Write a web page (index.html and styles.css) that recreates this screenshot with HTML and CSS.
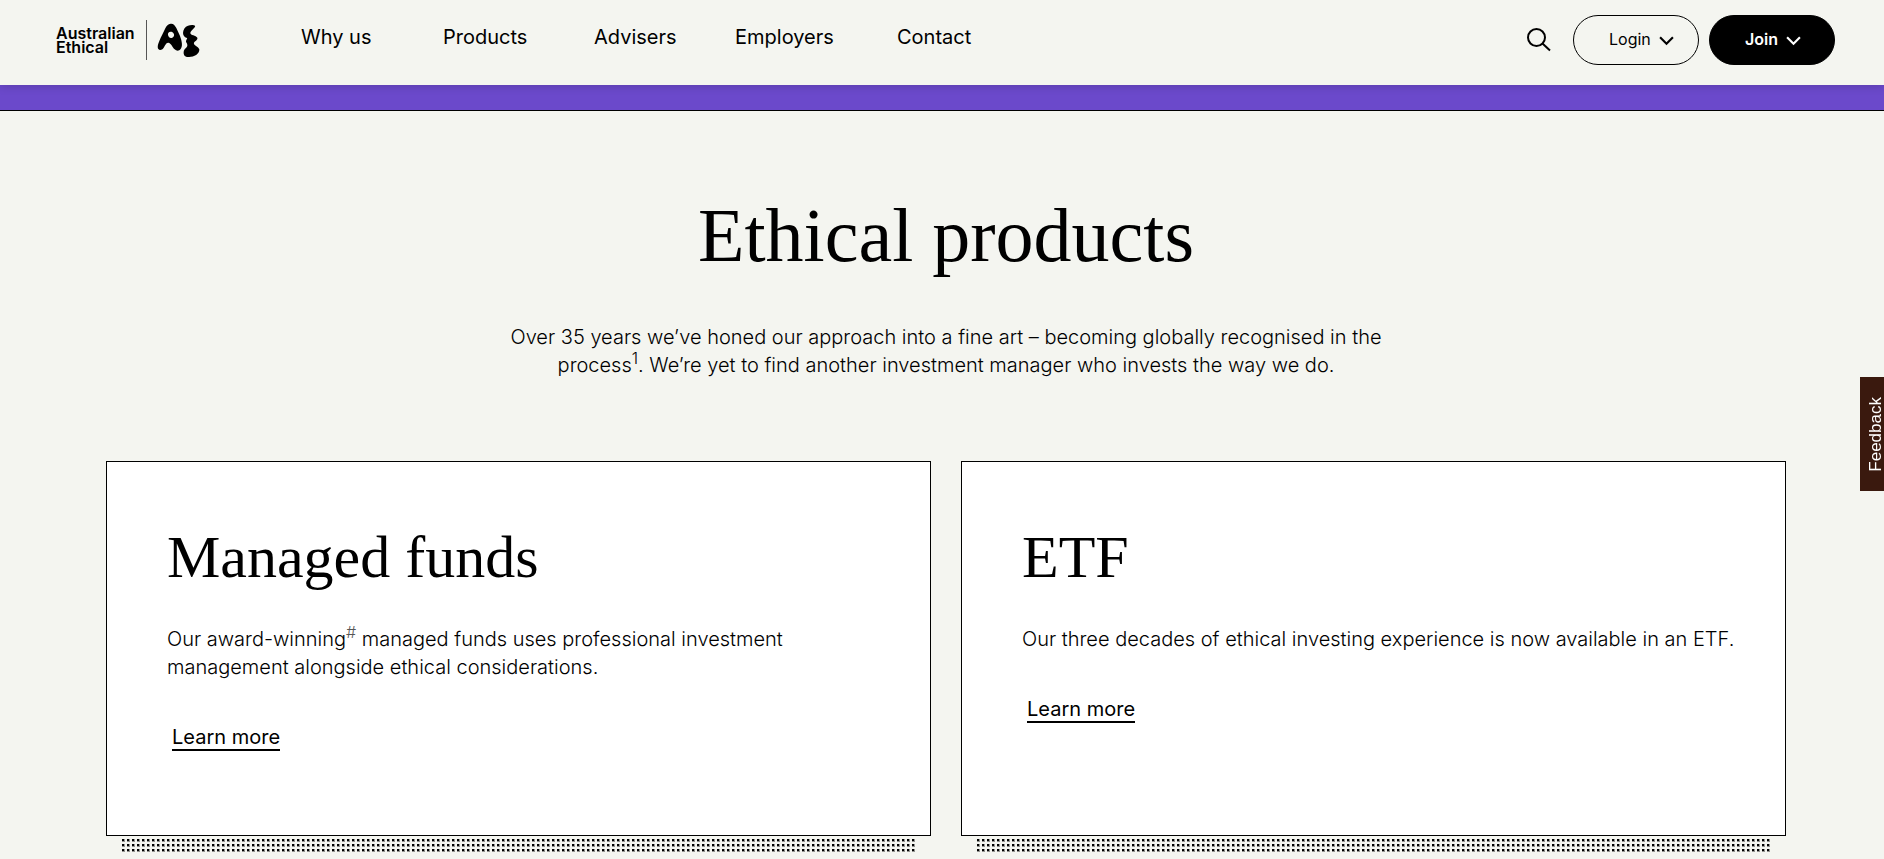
FILE: index.html
```
<!DOCTYPE html>
<html lang="en">
<head>
    <meta charset="UTF-8">
    <meta name="viewport" content="width=device-width, initial-scale=1.0">
    <title>Ethical products | Australian Ethical</title>
    <link rel="stylesheet" href="styles.css">
</head>
<body>
    <header class="header">
        <a class="logo" href="#" aria-label="Australian Ethical">
            <span class="logo-text">Australian<br>Ethical</span>
            <svg class="logo-mark" viewBox="18 36 132 105" aria-hidden="true">
                <path fill-rule="evenodd" d="M62 38C70 37 75 43 79 51C83 61 90 72 93 84C96 95 98 106 92 114C87 121 79 120 74 115C68 110 63 96 55 95C48 94 45 104 40 112C36 118 28 119 25 114C21 108 25 97 28 90C33 78 40 65 46 52C50 44 54 39 62 38ZM62 62C56 62 53 67 54 72C56 80 61 82 67 80C73 78 74 70 70 66C68 63 65 62 62 62Z"/>
                <path d="M114 44C121 41 132 41 135 44C138 49 122 58 121 66C121 73 138 73 142 80C144 87 135 89 132 95C129 103 146 106 148 115C149 130 130 139 115 138C105 138 100 132 101 123C102 111 113 111 112 102C112 96 107 94 108 90C109 85 113 83 111 81C106 80 99 75 99 66C99 56 105 47 114 44Z"/>
            </svg>
        </a>
        <nav class="nav">
            <a href="#">Why us</a>
            <a href="#">Products</a>
            <a href="#">Advisers</a>
            <a href="#">Employers</a>
            <a href="#">Contact</a>
        </nav>
        <div class="actions">
            <button class="search" type="button" aria-label="Search">
                <svg viewBox="0 0 24 24" aria-hidden="true"><circle cx="9.5" cy="9.5" r="8.5"/><path d="M15.5 15.5L23 22.5"/></svg>
            </button>
            <button class="pill" type="button">Login
                <svg viewBox="0 0 14 9" aria-hidden="true"><path d="M1 1l6 6 6-6"/></svg>
            </button>
            <button class="pill pill-dark" type="button">Join
                <svg viewBox="0 0 14 9" aria-hidden="true"><path d="M1 1l6 6 6-6"/></svg>
            </button>
        </div>
    </header>

    <div class="banner"></div>

    <main class="main">
        <h1>Ethical products</h1>
        <p class="intro">Over 35 years we’ve honed our approach into a fine art – becoming globally recognised in the process<sup>1</sup>. We’re yet to find another investment manager who invests the way we do.</p>

        <div class="cards">
            <section class="card-wrap">
                <div class="card">
                    <h2>Managed funds</h2>
                    <p>Our award-winning<sup class="hash">#</sup> managed funds uses professional investment management alongside ethical considerations.</p>
                    <a class="more" href="#">Learn more</a>
                </div>
                <div class="dots"></div>
            </section>
            <section class="card-wrap">
                <div class="card">
                    <h2>ETF</h2>
                    <p>Our three decades of ethical investing experience is now available in an ETF.</p>
                    <a class="more" href="#">Learn more</a>
                </div>
                <div class="dots"></div>
            </section>
        </div>
    </main>

    <button class="feedback" type="button">Feedback</button>
</body>
</html>
```

FILE: styles.css
```
* {
    box-sizing: border-box;
}

body {
    margin: 0;
    background-color: #f4f5f0;
    color: #000;
    font-family: Inter, "Liberation Sans", sans-serif;
    font-size: 20px;
    font-weight: 300;
    line-height: 28px;
}

a {
    color: inherit;
    text-decoration: none;
}

button {
    font-family: inherit;
    cursor: pointer;
}

/* Header */
.header {
    position: relative;
    display: flex;
    align-items: center;
    height: 85px;
    padding: 0 49px 5px 56px;
    background-color: #f4f5f0;
    box-shadow: 0 0 10px rgba(0, 0, 0, 0.2);
}

.logo {
    display: flex;
    align-items: center;
    width: 245px;
}

.logo-text {
    width: 91px;
    padding: 6px 0;
    border-right: 1px solid #555;
    font-size: 16px;
    font-weight: 600;
    line-height: 14px;
}

.logo-mark {
    width: 44px;
    height: 35px;
    margin-left: 9px;
}

.nav {
    display: grid;
    grid-template-columns: 142px 151px 141px 162px auto;
    padding-bottom: 6px;
    font-weight: 400;
}

.actions {
    display: flex;
    align-items: center;
    gap: 10px;
    margin-left: auto;
}

.search {
    width: 24px;
    height: 24px;
    margin-right: 12px;
    padding: 0;
    border: none;
    background: none;
}

svg {
    display: block;
}

.search svg,
.pill svg {
    fill: none;
    stroke: currentColor;
    stroke-width: 2;
}

.pill {
    display: flex;
    align-items: center;
    gap: 8px;
    width: 126px;
    height: 50px;
    padding: 0 0 3px 35px;
    border: 1px solid #000;
    border-radius: 25px;
    background: none;
    color: #000;
    font-size: 16px;
}

.pill svg {
    width: 15px;
    height: 10px;
    margin-top: 5px;
}

.pill-dark {
    background-color: #000;
    color: #fff;
    font-weight: 600;
}

.banner {
    height: 26px;
    border-bottom: 1px solid #000;
    background-color: #6b49cb;
}

/* Content */
.main {
    padding: 74px 98px 6px 106px;
}

h1,
h2 {
    margin: 0;
    font-family: "Liberation Serif", serif;
    font-weight: 400;
}

h1 {
    font-size: 76px;
    line-height: 100px;
    text-align: center;
}

.intro {
    max-width: 880px;
    margin: 38px auto 82px;
    text-align: center;
}

sup {
    font-size: 16px;
    line-height: 0;
}

.hash {
    color: #555;
}

.cards {
    display: grid;
    grid-template-columns: 1fr 1fr;
    gap: 30px;
}

.card-wrap {
    display: flex;
    flex-direction: column;
}

.card {
    flex: 1;
    min-height: 375px;
    padding: 59px 40px 60px 60px;
    border: 1px solid #000;
    background-color: #fff;
}

.card h2 {
    font-size: 60px;
    line-height: 72px;
}

.card p {
    margin: 32px 0 42px;
}

.more {
    display: inline-block;
    margin-left: 5px;
    border-bottom: 2px solid #000;
    font-weight: 400;
    line-height: 24px;
}

.dots {
    height: 14px;
    margin: 3px 15px 0 16px;
    background:
        conic-gradient(from 270deg at 2px 2px, #000 90deg, transparent 0) 0 0 / 5px 5px,
        conic-gradient(from 270deg at 3px 3px, rgba(0, 0, 0, 0.4) 90deg, transparent 0) 0 0 / 5px 5px;
}

.feedback {
    position: fixed;
    top: 377px;
    right: 0;
    width: 24px;
    height: 114px;
    padding: 0 0 0 8px;
    border: none;
    background-color: #3a190e;
    color: #fff;
    font-family: "Liberation Sans", sans-serif;
    font-size: 17px;
    line-height: 16px;
    writing-mode: sideways-lr;
}
```
